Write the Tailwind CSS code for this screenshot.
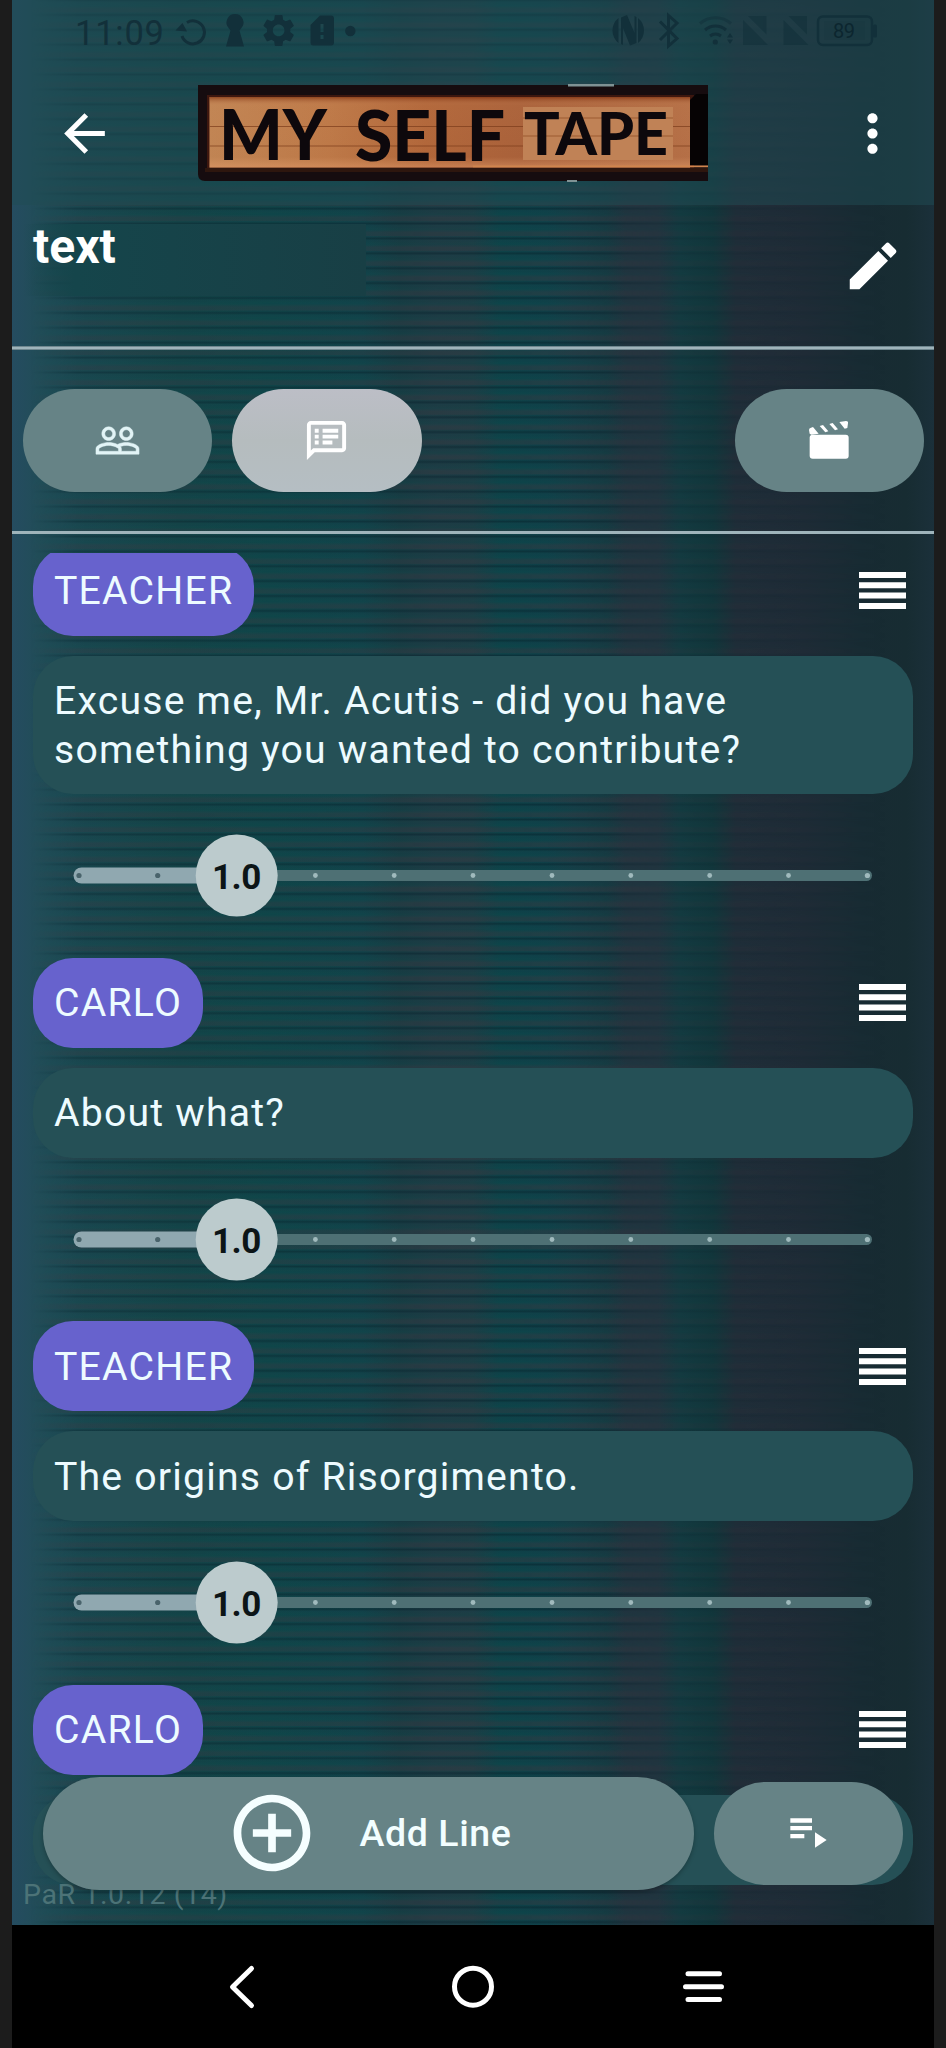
<!DOCTYPE html>
<html lang="en">
<head>
<meta charset="utf-8">
<title>My Self Tape</title>
<script src="https://cdn.jsdelivr.net/npm/@tailwindcss/browser@4"></script>
<style>
/* striped curtain backdrop */
.curtain{background:linear-gradient(90deg,#254c60 0,#214d58 3%,#1b4850 8%,#164549 18%,#12464a 28%,#14444b 38%,#1a3d44 42%,#203d46 46%,#1f3e46 50%,#10444a 53%,#12424a 58%,#183f48 61%,#183a42 64.500%,#22343f 66.500%,#22343f 70%,#143a40 72.500%,#12363b 76%,#202d38 78.500%,#1e2b36 86%,#182b33 92%,#172c32 97%,#1b303a 100%)}
.stripes{background:repeating-linear-gradient(180deg,rgba(4,30,40,.45) 0,rgba(4,50,60,.12) 2px,rgba(0,74,72,.14) 6px,rgba(58,56,64,.34) 9px,rgba(58,56,64,.34) 12px,rgba(4,50,60,.1) 13px,rgba(4,30,40,.45) 14.900px);-webkit-mask-image:linear-gradient(90deg,transparent 2%,rgba(0,0,0,.75) 7%,#000 62%,rgba(0,0,0,.4) 70%,rgba(0,0,0,.25) 80%,transparent 95%);mask-image:linear-gradient(90deg,transparent 2%,rgba(0,0,0,.75) 7%,#000 62%,rgba(0,0,0,.4) 70%,rgba(0,0,0,.25) 80%,transparent 95%)}
</style>
</head>
<body class="bg-[#1c1c1c] w-[946px] h-[2048px] overflow-hidden px-3 font-['Roboto',sans-serif]">
<div class="curtain relative w-[922px] h-[2048px] flex flex-col overflow-hidden text-white">
  <div class="stripes absolute inset-0"></div>

  <header class="relative h-[205px] shrink-0 bg-[#1f4c54]/50 flex flex-col">
    <!-- status bar -->
    <div class="h-[62px] flex items-center text-[#12303a]">
      <svg class="w-full h-full" viewBox="12 0 922 62" fill="currentColor">
        <text x="75" y="44.5" font-size="34.5" textLength="89" font-family="Roboto">11:09</text>
        <path d="M187 22.500A11.500 11.500 0 1 1 182 36" fill="none" stroke="currentColor" stroke-width="3"/><path d="M175.500 30.500l7-7.500 4.500 8.500z"/>
        <path d="M235 14a8.500 8.500 0 0 1 6 14.500l-1.500 2L244 46.500h-18l4.500-16-1.500-2a8.500 8.500 0 0 1 6-14.500z"/>
        <g transform="translate(259.200 11) scale(1.620)"><path d="M19.140 12.940c.04-.3.060-.61.060-.94 0-.32-.02-.64-.07-.94l2.030-1.580a.49.49 0 0 0 .12-.61l-1.920-3.320a.488.488 0 0 0-.59-.22l-2.390.96c-.5-.38-1.030-.7-1.620-.94l-.36-2.540a.484.484 0 0 0-.48-.41h-3.840c-.24 0-.43.17-.47.41l-.36 2.540c-.59.24-1.130.57-1.620.94l-2.390-.96c-.22-.08-.47 0-.59.22L2.740 8.870c-.12.21-.08.47.12.61l2.030 1.580c-.05.3-.09.63-.09.94s.02.64.070.94l-2.030 1.580a.49.49 0 0 0-.12.61l1.920 3.320c.12.22.37.29.59.22l2.390-.96c.5.38 1.030.7 1.620.94l.36 2.540c.05.24.24.41.48.41h3.840c.24 0 .44-.17.47-.41l.36-2.540c.59-.24 1.130-.56 1.620-.94l2.390.96c.22.08.47 0 .59-.22l1.920-3.320c.12-.22.070-.47-.12-.61l-2.010-1.580zM12 15.600c-1.980 0-3.600-1.620-3.600-3.600s1.620-3.600 3.600-3.600 3.600 1.620 3.600 3.600-1.620 3.600-3.600 3.600z"/></g>
        <path fill-rule="evenodd" d="M320 15.500h11a3 3 0 0 1 3 3V42.500a3 3 0 0 1-3 3H313.500a3 3 0 0 1-3-3V25zM320.500 24v8h3v-8zM320.500 35v4h3v-4z"/>
        <circle cx="350.300" cy="31" r="5.200"/>
        <!-- nfc -->
        <path d="M618.500 18A16 16 0 0 0 618.500 43zM638 18A16 16 0 0 1 638 43z"/>
        <path d="M621 17.500l6-2.500 7.500 18V16l2 1V43l-6.500 2.500-7-17.500V45l-2-1z"/>
        <path d="M660 21.500l17 17-8.500 7.500V15.500l8.500 7.500-17 17" fill="none" stroke="currentColor" stroke-width="3"/>
        <!-- wifi -->
        <g fill="none" stroke="currentColor" stroke-width="3"><path d="M700 23.500a24 24 0 0 1 31 0" opacity=".5"/><path d="M705 30a16 16 0 0 1 21 0"/><path d="M710 36a9 9 0 0 1 11 0"/></g>
        <circle cx="715.300" cy="42" r="2.600"/><path d="M730 33l3 4.500h-6zM730 44l3-4.500h-6z"/>
        <g opacity=".6"><path d="M743 20l25 25h-25zM748 16h18.500v18.500z"/><path d="M783.500 20l25 25h-25zM788.500 16H807v18.500z"/></g>
        <rect x="818" y="16.500" width="54" height="28.500" rx="5" fill="none" stroke="currentColor" stroke-width="2.500"/>
        <rect x="824" y="21" width="41" height="19" opacity=".2"/><rect x="873" y="24.500" width="4" height="13" rx="1.500"/>
        <text x="833" y="38" font-size="20" font-family="Roboto" textLength="22" fill="#0c262f">89</text>
      </svg>
    </div>
    <!-- toolbar -->
    <div class="relative h-[143px] flex items-start pl-[42px] pr-[31px]">
      <svg class="mt-[40.500px] w-[61px] h-[61px]" viewBox="0 0 24 24" fill="#fff"><path d="M20 11H7.830l5.590-5.590L12 4l-8 8 8 8 1.410-1.410L7.830 13H20v-2z"/></svg>
      <svg class="ml-[80px] mt-[20px] w-[516px] h-[102px]" viewBox="195 82 516 102" font-family="Lato,sans-serif" font-weight="900" fill="#0d080c">
        <defs>
          <linearGradient id="wood" x1="0" y1="0" x2="1" y2="0"><stop offset="0" stop-color="#bd8150"/><stop offset=".25" stop-color="#b97443"/><stop offset=".45" stop-color="#ac6034"/><stop offset=".65" stop-color="#a35a34"/><stop offset="1" stop-color="#b06a42"/></linearGradient>
          <linearGradient id="shade" x1="0" y1="0" x2="0" y2="1"><stop offset="0" stop-color="#7a2c0c" stop-opacity=".65"/><stop offset=".12" stop-color="#e0a070" stop-opacity=".15"/><stop offset=".85" stop-color="#e0a070" stop-opacity=".1"/><stop offset="1" stop-color="#e8a070" stop-opacity=".5"/></linearGradient>
        </defs>
        <path d="M198 85H708V181H205Q198 181 198 174z" fill="#160c0f"/>
        <path d="M205 168H708V172H205z" fill="#2e160e"/>
        <path d="M207 95H694V168H207z" fill="#3d170f"/>
        <path d="M209.500 97H690V167.500H209.500z" fill="url(#wood)"/>
        <path d="M209.500 97H690V167.500H209.500z" fill="url(#shade)"/>
        <path d="M209.500 126.500H690M209.500 146H690" stroke="#7c3c1b" stroke-width="1.200" opacity=".7"/>
        <path d="M523 107H673V160H523z" fill="#c08256"/>
        <path d="M523 118H673M523 136H673" stroke="#9c5a30" stroke-width="1"/>
        <path d="M690 100l6-6h12V165H690z" fill="#060304"/>
        <path d="M473 165.500H708v1.800H473z" fill="#d0854e"/>
        <path d="M568 84h46v2.500h-46zM567 180h10v2h-10z" fill="#7f9294"/>
        <text x="219" y="160" font-size="71" textLength="108" lengthAdjust="spacingAndGlyphs">MY</text>
        <text x="355" y="160.500" font-size="70" textLength="150" lengthAdjust="spacingAndGlyphs">SELF</text>
        <text x="524" y="155" font-size="59" textLength="144" lengthAdjust="spacingAndGlyphs">TAPE</text>
      </svg>
      <svg class="ml-auto mt-[40.500px] w-[61px] h-[61px]" viewBox="0 0 24 24" fill="#fff"><path d="M12 8c1.100 0 2-.9 2-2s-.9-2-2-2-2 .9-2 2 .9 2 2 2zm0 2c-1.100 0-2 .9-2 2s.9 2 2 2 2-.9 2-2-.9-2-2-2zm0 6c-1.100 0-2 .9-2 2s.9 2 2 2 2-.9 2-2-.9-2-2-2z"/></svg>
    </div>
  </header>

  <!-- script title -->
  <section class="relative h-[141px] shrink-0 flex justify-between items-start pl-[21px] pr-[30.500px]">
    <div class="absolute left-3 top-[19px] w-[342px] h-[72px] bg-linear-to-r from-[#1e4a54]/0 via-[#15454b] via-15% to-[#183f45]"></div>
    <h1 class="relative mt-[14px] text-[48px] leading-[56px] font-bold">text</h1>
    <svg class="mt-[30px] w-[62px] h-[62px]" viewBox="0 0 24 24" fill="#fff"><path d="M3 17.250V21h3.750L17.810 9.940l-3.750-3.750L3 17.250zM20.710 7.040a.996.996 0 0 0 0-1.410l-2.340-2.340a.996.996 0 0 0-1.410 0l-1.830 1.830 3.750 3.750 1.830-1.830z"/></svg>
  </section>
  <div class="relative h-1 shrink-0 bg-[#9fb4bb] border-y border-[#6f878f]"></div>

  <!-- tabs -->
  <nav class="relative h-[181px] shrink-0 flex items-center pl-[11px] pr-[10.500px] pb-px gap-5">
    <button class="w-[189px] h-[103px] rounded-full bg-[#668386] grid place-items-center">
      <svg class="w-[47px] h-[47px]" viewBox="0 0 24 24" fill="#e2f4f6" stroke="#e2f4f6" stroke-width=".25"><path d="M16.500 13c-1.200 0-3.070.34-4.500 1-1.430-.67-3.300-1-4.500-1C5.330 13 1 14.080 1 16.250V19h22v-2.750c0-2.170-4.330-3.250-6.500-3.250zm-4 4.500h-10v-1.250c0-.54 2.560-1.750 5-1.750s5 1.210 5 1.750v1.250zm9 0H14v-1.250c0-.46-.2-.86-.52-1.220.88-.3 1.960-.53 3.020-.53 2.440 0 5 1.210 5 1.750v1.250zM7.500 12c1.930 0 3.500-1.570 3.500-3.500S9.430 5 7.500 5 4 6.570 4 8.500 5.570 12 7.500 12zm0-5.500c1.100 0 2 .9 2 2s-.9 2-2 2-2-.9-2-2 .9-2 2-2zm9 5.500c1.930 0 3.500-1.570 3.500-3.500S18.430 5 16.500 5 13 6.570 13 8.500s1.570 3.500 3.500 3.500zm0-5.500c1.100 0 2 .9 2 2s-.9 2-2 2-2-.9-2-2 .9-2 2-2z"/></svg>
    </button>
    <button class="w-[189.500px] h-[103px] rounded-full bg-linear-to-b from-[#bcbec6] via-[#b5bcbe] to-[#b5bec3] grid place-items-center">
      <svg class="w-[47px] h-[47px]" viewBox="0 0 24 24" fill="#fff"><path d="M20 2H4c-1.100 0-1.990.9-1.990 2L2 22l4-4h14c1.100 0 2-.9 2-2V4c0-1.100-.9-2-2-2zm0 14H5.170L4 17.170V4h16v12zM6 12h2v2H6zM6 9h2v2H6zM6 6h2v2H6zM10 12h5v2h-5zM10 9h8v2h-8zM10 6h8v2h-8z"/></svg>
    </button>
    <button class="ml-auto w-[189px] h-[103px] rounded-full bg-[#668386] grid place-items-center">
      <svg class="w-[40px] h-[38px]" viewBox="1008 667 120 114" fill="#fff"><rect x="1010" y="708" width="117" height="72" rx="9"/><path d="M1008 694q0-6 6-7l6-2 17 20-22 3-5-3zM1040 682l10-3 16 19-9 3zM1069 676l10-3 16 19-9 3zM1099 670l20-3q7 0 6 7l-2 14-8 2z"/></svg>
    </button>
  </nav>
  <div class="relative h-[3px] shrink-0 bg-[#9fb4bb]"></div>

  <!-- dialogue lines -->
  <main class="relative mt-[18.500px] h-[1372.500px] shrink-0 overflow-hidden px-[21px] text-[39.200px] leading-[48.500px] tracking-[1.200px] text-[#edfbff]">
    <article class="-mt-[7px]">
      <div class="flex justify-between items-center pr-[7px]">
        <span class="rounded-[40px] bg-[#6762cd] px-[21px] pt-[21.500px] pb-5">TEACHER</span>
        <svg class="w-[47px] h-[37px]" viewBox="0 0 47 37" fill="#fff"><path d="M0 0h47v6H0zM0 10.300h47v6H0zM0 20.600h47v6H0zM0 30.900h47v6H0z"/></svg>
      </div>
      <p class="mt-5 rounded-[40px] bg-[#255056] px-[21px] pt-[21.500px] pb-5">Excuse me, Mr. Acutis - did you have<br>something you wanted to contribute?</p>
      <svg class="block w-[880px] h-[163.500px]" viewBox="33 0 880 163.500"><use href="#slider"/></svg>
    </article>
    <article>
      <div class="flex justify-between items-center pr-[7px]">
        <span class="rounded-[40px] bg-[#6762cd] px-[21px] pt-[21.500px] pb-5">CARLO</span>
        <svg class="w-[47px] h-[37px]" viewBox="0 0 47 37" fill="#fff"><path d="M0 0h47v6H0zM0 10.300h47v6H0zM0 20.600h47v6H0zM0 30.900h47v6H0z"/></svg>
      </div>
      <p class="mt-5 rounded-[40px] bg-[#255056] px-[21px] pt-[21.500px] pb-5">About what?</p>
      <svg class="block w-[880px] h-[163.500px]" viewBox="33 0 880 163.500"><use href="#slider"/></svg>
    </article>
    <article>
      <div class="flex justify-between items-center pr-[7px]">
        <span class="rounded-[40px] bg-[#6762cd] px-[21px] pt-[21.500px] pb-5">TEACHER</span>
        <svg class="w-[47px] h-[37px]" viewBox="0 0 47 37" fill="#fff"><path d="M0 0h47v6H0zM0 10.300h47v6H0zM0 20.600h47v6H0zM0 30.900h47v6H0z"/></svg>
      </div>
      <p class="mt-5 rounded-[40px] bg-[#255056] px-[21px] pt-[21.500px] pb-5">The origins of Risorgimento.</p>
      <svg class="block w-[880px] h-[163.500px]" viewBox="33 0 880 163.500">
        <g id="slider">
          <rect x="200" y="76" width="672" height="11" rx="5.500" fill="#4e7074"/>
          <rect x="73.500" y="73.500" width="170" height="16" rx="8" fill="#90a8b0"/>
          <g fill="#49636b"><circle cx="79" cy="81.500" r="2.600"/><circle cx="157.700" cy="81.500" r="2.600"/></g>
          <g fill="#a0babd"><circle cx="315.400" cy="81.500" r="2.400"/><circle cx="394.200" cy="81.500" r="2.400"/><circle cx="473" cy="81.500" r="2.400"/><circle cx="552" cy="81.500" r="2.400"/><circle cx="630.800" cy="81.500" r="2.400"/><circle cx="709.700" cy="81.500" r="2.400"/><circle cx="788.500" cy="81.500" r="2.400"/><circle cx="867.400" cy="81.500" r="2.600"/></g>
          <circle cx="236.700" cy="81.500" r="41" fill="#bccbcd"/>
          <text x="212" y="94.500" font-family="Roboto" font-weight="700" font-size="35" textLength="50.500" fill="#0c1517">1.0</text>
        </g>
      </svg>
    </article>
    <article>
      <div class="flex justify-between items-center pr-[7px]">
        <span class="rounded-[40px] bg-[#6762cd] px-[21px] pt-[21.500px] pb-5">CARLO</span>
        <svg class="w-[47px] h-[37px]" viewBox="0 0 47 37" fill="#fff"><path d="M0 0h47v6H0zM0 10.300h47v6H0zM0 20.600h47v6H0zM0 30.900h47v6H0z"/></svg>
      </div>
      <p class="mt-5 h-[90px] rounded-[40px] bg-[#255056]"></p>
    </article>
  </main>

  <!-- version label and floating actions -->
  <div class="absolute left-[11px] top-[1878px] text-[28.500px] leading-[34px] tracking-[.6px] text-[#4c7377]">PaR 1.0.12 (14)</div>
  <div class="absolute left-[31px] top-[1776.500px] flex items-center gap-5">
    <button class="w-[650.500px] h-[113px] rounded-full bg-[#668386] shadow-[0_2px_4px_rgba(0,0,0,.25)] flex items-center pl-[182.500px]">
      <svg class="w-[92px] h-[92px]" viewBox="0 0 24 24" fill="#f5feff"><path d="M13 7h-2v4H7v2h4v4h2v-4h4v-2h-4V7zm-1-5C6.480 2 2 6.480 2 12s4.480 10 10 10 10-4.480 10-10S17.520 2 12 2zm0 18c-4.410 0-8-3.590-8-8s3.590-8 8-8 8 3.590 8 8-3.590 8-8 8z"/></svg>
      <span class="ml-[42px] text-[37.500px] font-medium tracking-[.6px] text-[#f3feff]">Add Line</span>
    </button>
    <button class="w-[189.500px] h-[103px] rounded-full bg-[#668386] grid place-items-center">
      <svg class="w-[37px] h-[30px]" viewBox="953 482 111 90" fill="#fff"><path d="M954 483h65v13h-65zM954 506h65v13h-65zM954 530h42v13h-42zM1028 525l35 23-35 23z"/></svg>
    </button>
  </div>

  <!-- system navigation -->
  <footer class="relative h-[123px] shrink-0 bg-black">
    <svg class="w-full h-full" viewBox="12 1925 922 123" fill="none" stroke="#fff" stroke-width="5" stroke-linecap="round" stroke-linejoin="round">
      <path d="M251.500 1968.500l-19 18.500 19 18.500"/><circle cx="473" cy="1986.700" r="18.500"/><path d="M688 1973.700h31.500M685.500 1986.700h36M688 1999.500h31.500"/>
    </svg>
  </footer>
</div>
</body>
</html>
